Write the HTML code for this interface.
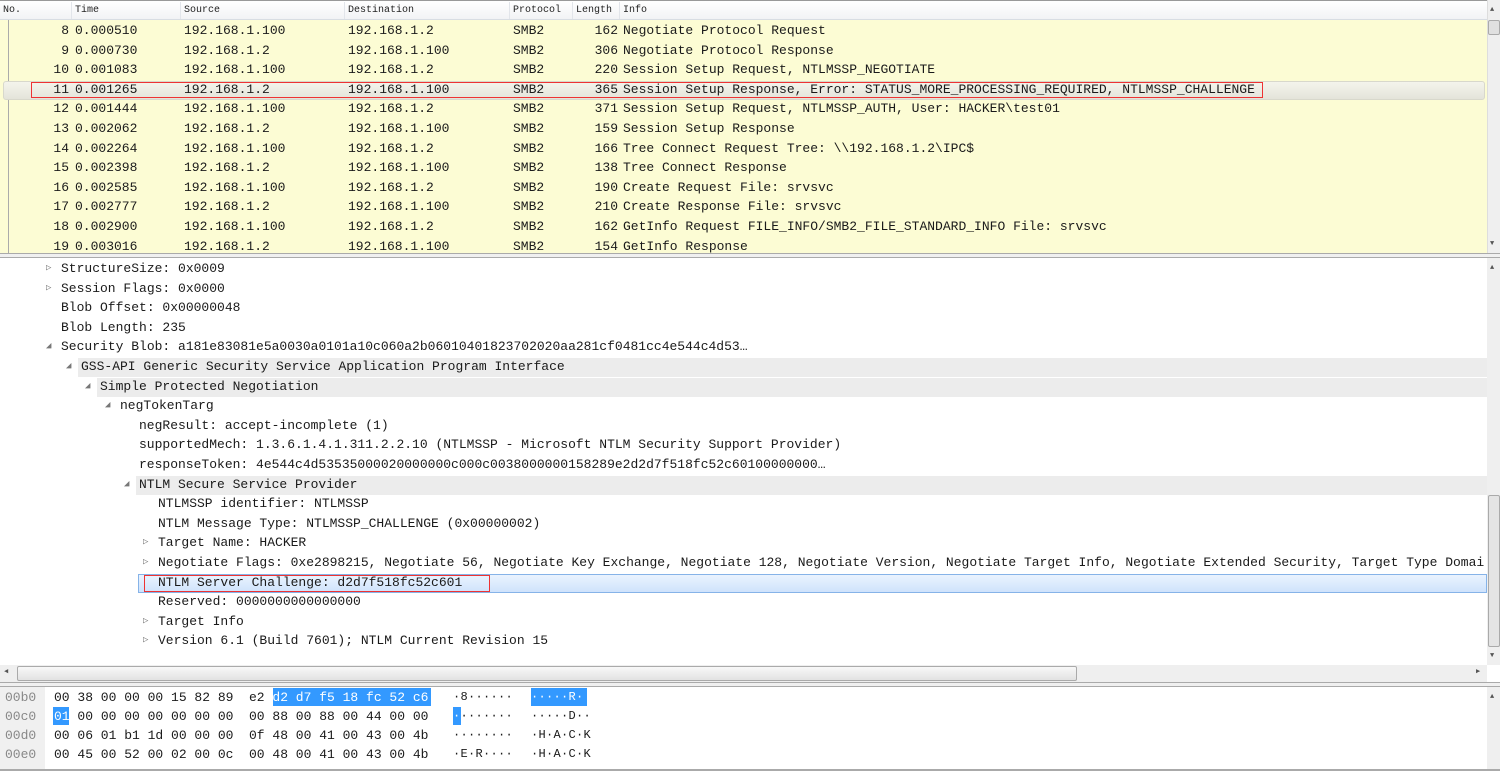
<!DOCTYPE html>
<html><head><meta charset="utf-8"><style>
*{margin:0;padding:0;box-sizing:border-box}
body{width:1500px;height:771px;overflow:hidden;background:#fff;font-family:"Liberation Mono",monospace;font-size:13px;color:#1a1a1a;position:relative}
.a{position:absolute;white-space:pre;line-height:19px}
.h{position:absolute;top:0;height:20px;font-size:10px;line-height:22px;font-family:"Liberation Mono",monospace;color:#222}
.tri{position:absolute;font-size:9px;color:#777;line-height:19px}
</style></head><body>
<div style="position:absolute;left:0;top:0;width:1487px;height:20px;background:linear-gradient(#fff,#f2f3f5);border-top:1px solid #999;border-bottom:1px solid #d8dde3"></div>
<div class="h" style="left:3px">No.</div>
<div style="position:absolute;left:71px;top:2px;width:1px;height:17px;background:#e2e5ea"></div>
<div class="h" style="left:75px">Time</div>
<div style="position:absolute;left:180px;top:2px;width:1px;height:17px;background:#e2e5ea"></div>
<div class="h" style="left:184px">Source</div>
<div style="position:absolute;left:344px;top:2px;width:1px;height:17px;background:#e2e5ea"></div>
<div class="h" style="left:348px">Destination</div>
<div style="position:absolute;left:509px;top:2px;width:1px;height:17px;background:#e2e5ea"></div>
<div class="h" style="left:513px">Protocol</div>
<div style="position:absolute;left:572px;top:2px;width:1px;height:17px;background:#e2e5ea"></div>
<div class="h" style="left:576px">Length</div>
<div style="position:absolute;left:619px;top:2px;width:1px;height:17px;background:#e2e5ea"></div>
<div class="h" style="left:623px">Info</div>
<div style="position:absolute;left:0;top:20px;width:1487px;height:233px;background:#fcfcd4"></div>
<div style="position:absolute;left:8px;top:20px;width:1px;height:233px;background:#aaa"></div>
<div style="position:absolute;left:3px;top:81px;width:1482px;height:19px;background:linear-gradient(#f4f4ec,#e4e4da);border:1px solid #d8d8cc;border-radius:3px"></div>
<div style="position:absolute;left:31px;top:82px;width:1232px;height:16px;border:1px solid #e33"></div>
<div id="pl"></div>
<div style="position:absolute;left:1487px;top:0;width:13px;height:253px;background:#efefef;border-left:1px solid #ddd"></div>
<div style="position:absolute;left:1488px;top:20px;width:12px;height:15px;background:#e0e0e0;border:1px solid #aaa;border-radius:2px"></div>
<div style="position:absolute;left:1490px;top:6px;font-size:7px;color:#555">▲</div>
<div style="position:absolute;left:1490px;top:240px;font-size:7px;color:#555">▼</div>
<div style="position:absolute;left:0;top:253px;width:1500px;height:5px;background:#f0f0f0;border-top:1px solid #aaa;border-bottom:1px solid #aaa"></div>
<div style="position:absolute;left:78px;top:358px;width:1409px;height:19px;background:#ececec"></div>
<div style="position:absolute;left:97px;top:378px;width:1390px;height:19px;background:#ececec"></div>
<div style="position:absolute;left:136px;top:476px;width:1351px;height:19px;background:#ececec"></div>
<div style="position:absolute;left:138px;top:574px;width:1349px;height:19px;background:linear-gradient(#eaf3fe,#cfe3fc);border:1px solid #86b3e8"></div>
<div style="position:absolute;left:144px;top:575px;width:346px;height:17px;border:1px solid #e33"></div>
<div id="dl"></div>
<div style="position:absolute;left:1487px;top:258px;width:13px;height:407px;background:#efefef"></div>
<div style="position:absolute;left:1488px;top:495px;width:12px;height:152px;background:#e4e4e4;border:1px solid #aaa;border-radius:2px"></div>
<div style="position:absolute;left:1490px;top:264px;font-size:7px;color:#555">▲</div>
<div style="position:absolute;left:1490px;top:652px;font-size:7px;color:#555">▼</div>
<div style="position:absolute;left:0;top:665px;width:1487px;height:17px;background:#efefef"></div>
<div style="position:absolute;left:17px;top:666px;width:1060px;height:15px;background:linear-gradient(#f8f8f8,#e2e2e2);border:1px solid #aaa;border-radius:2px"></div>
<div style="position:absolute;left:4px;top:667px;font-size:7px;color:#555">◀</div>
<div style="position:absolute;left:1476px;top:667px;font-size:7px;color:#555">▶</div>
<div style="position:absolute;left:0;top:682px;width:1500px;height:5px;background:#f0f0f0;border-top:1px solid #aaa;border-bottom:1px solid #aaa"></div>
<div style="position:absolute;left:0;top:687px;width:45px;height:84px;background:#f0f0f0"></div>
<div style="position:absolute;left:1487px;top:687px;width:13px;height:84px;background:#efefef"></div>
<div style="position:absolute;left:1490px;top:693px;font-size:7px;color:#555">▲</div>
<div style="position:absolute;left:0;top:769px;width:1500px;height:2px;background:#aaa"></div>
<div style="position:absolute;left:273px;top:688px;width:158px;height:18px;background:#3399ff"></div>
<div style="position:absolute;left:531px;top:688px;width:56px;height:18px;background:#3399ff"></div>
<div style="position:absolute;left:53px;top:707px;width:16px;height:18px;background:#3399ff"></div>
<div style="position:absolute;left:453px;top:707px;width:8px;height:18px;background:#3399ff"></div>
<div id="hx"></div>
<script>
var P=[[8,"0.000510","192.168.1.100","192.168.1.2",162,"Negotiate Protocol Request"],
[9,"0.000730","192.168.1.2","192.168.1.100",306,"Negotiate Protocol Response"],
[10,"0.001083","192.168.1.100","192.168.1.2",220,"Session Setup Request, NTLMSSP_NEGOTIATE"],
[11,"0.001265","192.168.1.2","192.168.1.100",365,"Session Setup Response, Error: STATUS_MORE_PROCESSING_REQUIRED, NTLMSSP_CHALLENGE"],
[12,"0.001444","192.168.1.100","192.168.1.2",371,"Session Setup Request, NTLMSSP_AUTH, User: HACKER\\test01"],
[13,"0.002062","192.168.1.2","192.168.1.100",159,"Session Setup Response"],
[14,"0.002264","192.168.1.100","192.168.1.2",166,"Tree Connect Request Tree: \\\\192.168.1.2\\IPC$"],
[15,"0.002398","192.168.1.2","192.168.1.100",138,"Tree Connect Response"],
[16,"0.002585","192.168.1.100","192.168.1.2",190,"Create Request File: srvsvc"],
[17,"0.002777","192.168.1.2","192.168.1.100",210,"Create Response File: srvsvc"],
[18,"0.002900","192.168.1.100","192.168.1.2",162,"GetInfo Request FILE_INFO/SMB2_FILE_STANDARD_INFO File: srvsvc"],
[19,"0.003016","192.168.1.2","192.168.1.100",154,"GetInfo Response"]];
var s="";
function t(x,y,txt,st){return '<div class="a" style="left:'+x+'px;top:'+y+'px;'+(st||'')+'">'+txt.replace(/&/g,'&amp;').replace(/</g,'&lt;')+'</div>';}
P.forEach(function(r,i){var y=Math.round(21+i*19.6);
s+='<div class="a" style="left:0;top:'+y+'px;width:69px;text-align:right">'+r[0]+'</div>';
s+=t(75,y,r[1])+t(184,y,r[2])+t(348,y,r[3])+t(513,y,"SMB2")+'<div class="a" style="left:560px;top:'+y+'px;width:58px;text-align:right">'+r[4]+'</div>'+t(623,y,r[5]);});
document.getElementById("pl").innerHTML=s;
var D=[[61,"StructureSize: 0x0009","r"],[61,"Session Flags: 0x0000","r"],[61,"Blob Offset: 0x00000048"],[61,"Blob Length: 235"],
[61,"Security Blob: a181e83081e5a0030a0101a10c060a2b06010401823702020aa281cf0481cc4e544c4d53…","d"],
[81,"GSS-API Generic Security Service Application Program Interface","d"],[100,"Simple Protected Negotiation","d"],[120,"negTokenTarg","d"],
[139,"negResult: accept-incomplete (1)"],[139,"supportedMech: 1.3.6.1.4.1.311.2.2.10 (NTLMSSP - Microsoft NTLM Security Support Provider)"],
[139,"responseToken: 4e544c4d53535000020000000c000c0038000000158289e2d2d7f518fc52c60100000000…"],
[139,"NTLM Secure Service Provider","d"],[158,"NTLMSSP identifier: NTLMSSP"],[158,"NTLM Message Type: NTLMSSP_CHALLENGE (0x00000002)"],
[158,"Target Name: HACKER","r"],[158,"Negotiate Flags: 0xe2898215, Negotiate 56, Negotiate Key Exchange, Negotiate 128, Negotiate Version, Negotiate Target Info, Negotiate Extended Security, Target Type Domai","r"],
[158,"NTLM Server Challenge: d2d7f518fc52c601"],[158,"Reserved: 0000000000000000"],[158,"Target Info","r"],[158,"Version 6.1 (Build 7601); NTLM Current Revision 15","r"]];
s="";
D.forEach(function(r,i){var y=Math.round(259+i*19.6);
if(r[2])s+='<div class="tri" style="left:'+(r[0]-15)+'px;top:'+y+'px">'+(r[2]=="r"?"▷":"◢")+'</div>';
s+='<div class="a" style="left:'+r[0]+'px;top:'+y+'px;width:'+(1486-r[0])+'px;overflow:hidden">'+r[1]+'</div>';});
document.getElementById("dl").innerHTML=s;
var H=[["00b0","00 38 00 00 00 15 82 89","e2 <w>d2 d7 f5 18 fc 52 c6</w>","·8······","<w>·····R·</w>"],
["00c0","<w>01</w> 00 00 00 00 00 00 00","00 88 00 88 00 44 00 00","<w>·</w>·······","·····D··"],
["00d0","00 06 01 b1 1d 00 00 00","0f 48 00 41 00 43 00 4b","········","·H·A·C·K"],
["00e0","00 45 00 52 00 02 00 0c","00 48 00 41 00 43 00 4b","·E·R····","·H·A·C·K"]];
s="";
H.forEach(function(r,i){var y=688+i*19;
s+='<div class="a" style="left:5px;top:'+y+'px;color:#888">'+r[0]+'</div>';
var f=function(x){return x.replace(/<w>/g,'<span style="color:#fff">').replace(/<\/w>/g,'</span>')};
s+='<div class="a" style="left:54px;top:'+y+'px">'+f(r[1])+'</div><div class="a" style="left:249px;top:'+y+'px">'+f(r[2])+'</div><div class="a" style="left:453px;top:'+y+'px;font-size:12px;letter-spacing:0.3px">'+f(r[3])+'</div><div class="a" style="left:531px;top:'+y+'px;font-size:12px;letter-spacing:0.3px">'+f(r[4])+'</div>';});
document.getElementById("hx").innerHTML=s;
</script>
</body></html>
